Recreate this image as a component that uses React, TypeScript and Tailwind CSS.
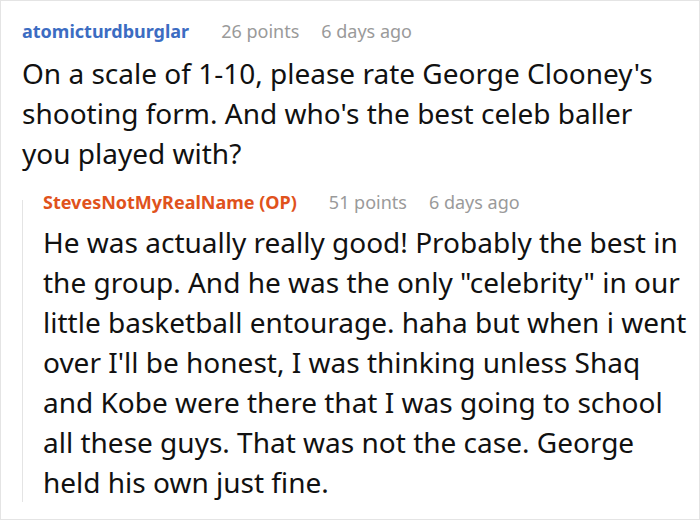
const Meta = ({ points, time }: { points: string; time: string }) => (
  <>
    <span className="ml-[32px] text-[#9a9a9a]">{points}</span>
    <span className="ml-[22px] text-[#9a9a9a]">{time}</span>
  </>
);

export default function App() {
  return (
    <div
      className="w-[700px] h-[520px] border border-[#e4e4e4] bg-white overflow-hidden"
      style={{ fontFamily: '"Noto Sans", "Open Sans", sans-serif' }}
    >
      <div className="pl-[21px] pr-[10px] pt-[17px]">
        <div className="text-[18px] leading-[26px]">
          <span className="font-bold text-[#3c6cc2]">atomicturdburglar</span>
          <Meta points="26 points" time="6 days ago" />
        </div>
        <p className="mt-[9px] pr-[36px] text-[28px] leading-[40px] text-[#111]">
          On a scale of 1-10, please rate George Clooney's shooting form. And who's the best celeb baller you played with?
        </p>

        <div className="mt-[16px] flex">
          <div className="w-px bg-[#e4e4e4] mt-[11px]" />
          <div className="pl-[20px] flex-1">
            <div className="text-[18px] leading-[26px]">
              <span className="font-bold text-[#e0521c]">StevesNotMyRealName (OP)</span>
              <Meta points="51 points" time="6 days ago" />
            </div>
            <p className="mt-[7px] text-[28px] leading-[40px] text-[#111]">
              He was actually really good! Probably the best in the group. And he was the only "celebrity" in our little
              basketball entourage. haha but when i went over I'll be honest, I was thinking unless Shaq and Kobe were
              there that I was going to school all these guys. That was not the case. George held his own just fine.
            </p>
          </div>
        </div>
      </div>
    </div>
  );
}
